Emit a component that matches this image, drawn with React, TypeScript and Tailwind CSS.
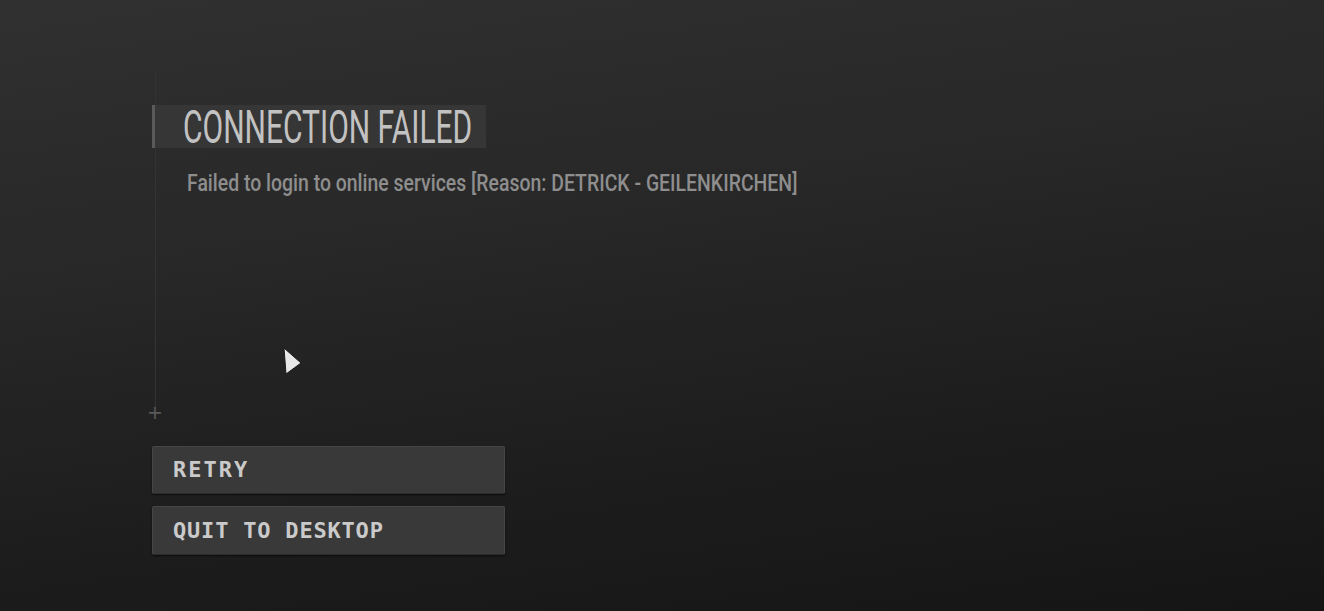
import React from "react";

function Cursor() {
  return (
    <svg
      className="absolute left-[281px] top-[345px]"
      width="24"
      height="32"
      viewBox="0 0 24 32"
    >
      <polygon points="3,3 20,18 5,29" fill="#e8e8e8" stroke="#1a1a1a" strokeWidth="1" strokeLinejoin="round" />
    </svg>
  );
}

export default function App() {
  return (
    <div className="relative min-h-[611px] w-full overflow-hidden bg-[linear-gradient(172deg,#303030_0%,#282828_35%,#1d1d1d_70%,#151515_100%)] font-['Roboto',sans-serif]">
      <div className="pl-[152px] pt-[70px]">
        <div className="ml-[3px] h-[336px] border-l border-[#333333] pt-[35px]">
          <div className="-ml-[4px] flex h-[43px] w-[334px] items-center border-l-[3px] border-[#5a5a5a] bg-[#363636] pl-[28px]">
            <span className="inline-block origin-left scale-x-[0.652] whitespace-nowrap text-[46px] leading-none text-[#c2c2c2] font-['Roboto',sans-serif]">
              CONNECTION FAILED
            </span>
          </div>
          <div className="ml-[31px] mt-[24px] h-[26px]">
            <span className="inline-block origin-left scale-x-[0.845] whitespace-nowrap text-[23px] font-medium leading-none text-[#8e8e8e]">
              Failed to login to online services [Reason: DETRICK - GEILENKIRCHEN]
            </span>
          </div>
        </div>
        <div className="-ml-[4px] flex h-[12px] w-[14px] items-center justify-center text-[19px] leading-none text-[#5a5a5a] font-['DejaVu_Sans',sans-serif]">
          +
        </div>
        <div className="mt-[28px] flex w-[353px] flex-col gap-[12px]">
          <div className="flex h-[48px] items-center rounded-[2px] border border-[#464646] border-b-[#2c2c2c] bg-[#393939] pl-[20px] shadow-[0_1px_2px_rgba(0,0,0,0.6)]">
            <span className="text-[22px] font-bold leading-none tracking-[2px] text-[#cacaca] font-['DejaVu_Sans_Mono',monospace]">
              RETRY
            </span>
          </div>
          <div className="flex h-[49px] items-center rounded-[2px] border border-[#464646] border-b-[#2c2c2c] bg-[#393939] pl-[20px] shadow-[0_1px_2px_rgba(0,0,0,0.6)]">
            <span className="text-[22px] font-bold leading-none tracking-[0.8px] text-[#cacaca] font-['DejaVu_Sans_Mono',monospace]">
              QUIT TO DESKTOP
            </span>
          </div>
        </div>
      </div>
      <Cursor />
    </div>
  );
}
